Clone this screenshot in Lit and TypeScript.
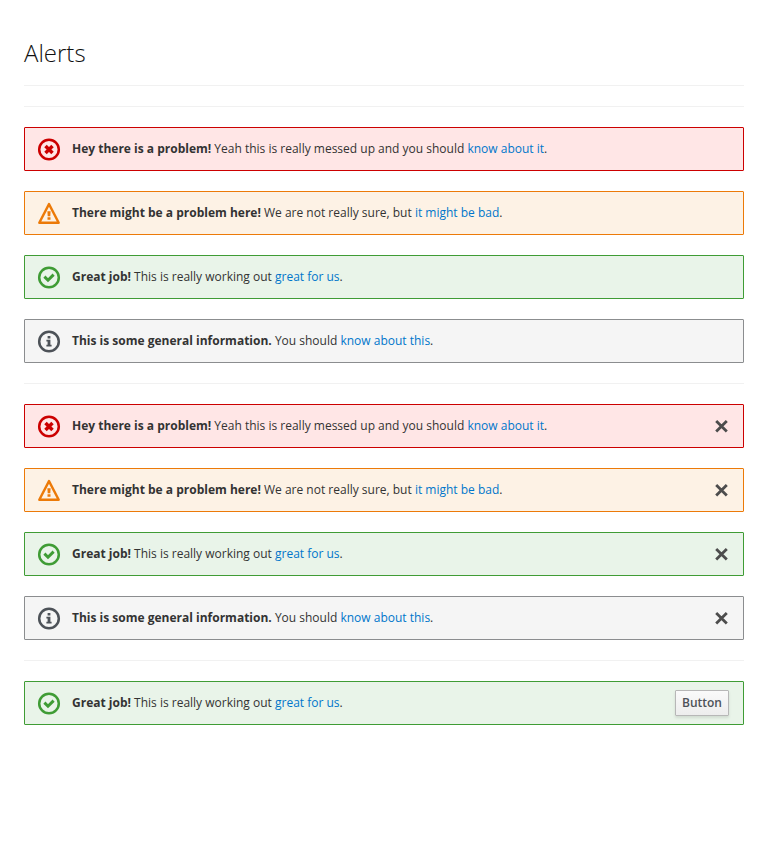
import { LitElement, html, css, svg, nothing } from "lit";
import { customElement, property } from "lit/decorators.js";

const ring = svg`<circle cx="11" cy="11" r="9.8" fill="none" stroke="currentColor" stroke-width="2.5"/>`;
const icons: Record<string, unknown> = {
  danger: svg`${ring}<path d="M7.5 7.5l7 7M14.5 7.5l-7 7" stroke="currentColor" stroke-width="3.5"/>`,
  warning: svg`<path d="M11 1.6L20.7 20.3H1.3Z" fill="none" stroke="currentColor" stroke-width="2.4" stroke-linejoin="round"/><path d="M9.4 8.8h3.2l-.3 5H9.7zM9.5 14.8h3v2.4h-3z" fill="currentColor"/>`,
  success: svg`${ring}<path d="M6.4 10.1l3.6 3.6 5.6-5.6" fill="none" stroke="currentColor" stroke-width="3"/>`,
  info: svg`${ring}<path d="M9.6 5.6h2.8v2.4H9.6zM8.4 9.2h4v5h1.2v1.9H8.4v-1.9h1.2v-3.1H8.4z" fill="currentColor"/>`,
};

@customElement("alert-box")
class AlertBox extends LitElement {
  @property() kind = "info";
  @property() action = "";
  static styles = css`
    :host { display: block; margin-bottom: 20px; }
    .alert { box-sizing: border-box; height: 44px; border: 1px solid; border-radius: 1px; display: flex; align-items: center; padding: 0 14px 0 13px; }
    .danger { border-color: #c00; background: #ffe6e6; }
    .warning { border-color: #ec7a08; background: #fdf2e5; }
    .success { border-color: #3f9c35; background: #e9f4e9; }
    .info { border-color: #8b8d8f; background: #f5f5f5; }
    .icon { width: 22px; height: 22px; margin: 0 12px 0 0; flex: none; overflow: visible; }
    .danger .icon { color: #c00; }
    .warning .icon { color: #ec7a08; }
    .success .icon { color: #3f9c35; }
    .info .icon { color: #4d5258; }
    .text { flex: 1; line-height: 20px; white-space: nowrap; }
    .close { width: 14px; height: 14px; color: #4d4d4d; }
    .button { font: 600 12px/24px "Open Sans", sans-serif; color: #4d5258; height: 26px; box-sizing: border-box; width: 54px; padding: 0; border: 1px solid #b7b7b7; border-radius: 1px; background: linear-gradient(#fafafa, #ededed); box-shadow: 0 2px 3px rgba(3, 3, 3, 0.1); }
  `;
  render() {
    return html`<div class="alert ${this.kind}">
      <svg class="icon" viewBox="0 -0.5 22 22">${icons[this.kind]}</svg>
      <div class="text"><slot></slot></div>
      ${this.action === "close"
        ? html`<svg class="close" viewBox="0 0 14 14"><path d="M1.2 1.9l10.6 10.6M11.8 1.9L1.2 12.5" stroke="currentColor" stroke-width="2.8"/></svg>`
        : this.action === "button" ? html`<button class="button">Button</button>` : nothing}
    </div>`;
  }
}

const messages = [
  { kind: "danger", title: "Hey there is a problem!", body: "Yeah this is really messed up and you should", link: "know about it" },
  { kind: "warning", title: "There might be a problem here!", body: "We are not really sure, but", link: "it might be bad" },
  { kind: "success", title: "Great job!", body: "This is really working out", link: "great for us" },
  { kind: "info", title: "This is some general information.", body: "You should", link: "know about this" },
];

@customElement("app-root")
class AppRoot extends LitElement {
  static styles = css`
    :host { display: block; box-sizing: border-box; min-height: 845px; padding: 36px 24px 0; background: #fff; color: #333; font: 12px/20px "Open Sans", sans-serif; }
    h1 { font-size: 24px; font-weight: 300; line-height: 34px; margin: 0 0 15px; color: #111; }
    hr { border: 0; border-top: 1px solid #f1f1f1; margin: 0 0 20px; }
    b { font-weight: 700; }
    a { color: #0076cb; text-decoration: none; }
  `;
  alert(m: (typeof messages)[0], action = "") {
    return html`<alert-box kind=${m.kind} action=${action}><b>${m.title}</b> ${m.body} <a>${m.link}</a>.</alert-box>`;
  }
  render() {
    return html`<h1>Alerts</h1>
      <hr><hr>
      ${messages.map((m) => this.alert(m))}
      <hr>
      ${messages.map((m) => this.alert(m, "close"))}
      <hr>
      ${this.alert(messages[2], "button")}`;
  }
}
